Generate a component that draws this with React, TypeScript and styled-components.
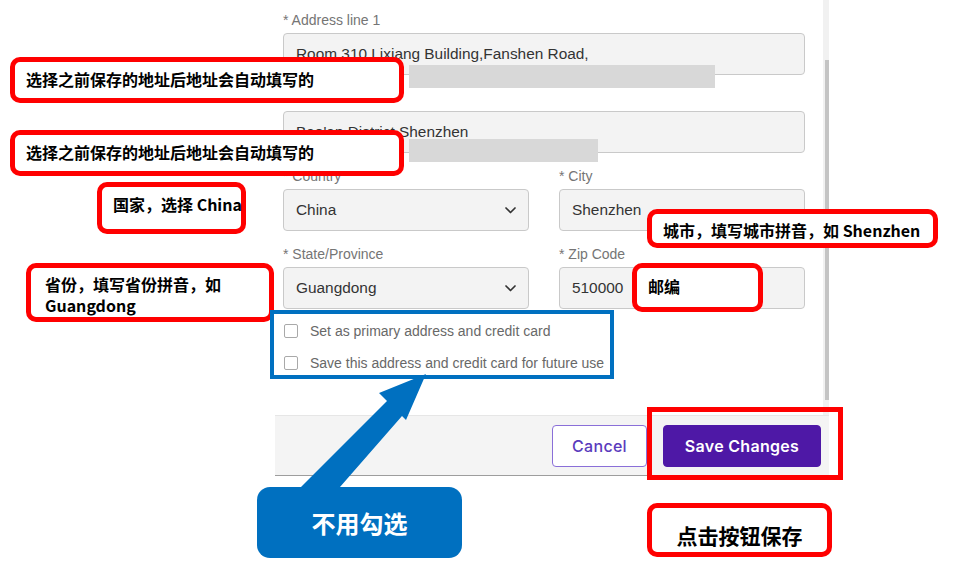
import React from "react";
import styled, { createGlobalStyle } from "styled-components";

const Global = createGlobalStyle`
  html, body { margin: 0; padding: 0; background: #ffffff; }
  * { box-sizing: border-box; }
`;

const Page = styled.div`
  position: relative;
  width: 958px;
  height: 583px;
  overflow: hidden;
  background: #fff;
  font-family: "Liberation Sans", Arial, sans-serif;
`;

const Panel = styled.div`
  margin-left: 275px;
  width: 554px;
  display: flex;
  flex-direction: column;
`;

const BodyRow = styled.div`
  display: flex;
  height: 415px;
`;

const Form = styled.div`
  flex: 1;
  padding: 11px 18px 0 8px;
  display: flex;
  flex-direction: column;
`;

const Grid = styled.div`
  display: grid;
  grid-template-columns: 246px 246px;
  column-gap: 30px;
  row-gap: 14px;
`;

const Field = styled.div<{ $full?: boolean }>`
  display: flex;
  flex-direction: column;
  gap: 3px;
  grid-column: ${(p) => (p.$full ? "1 / span 2" : "auto")};
`;

const Label = styled.div`
  min-height: 19px;
  font-size: 14px;
  line-height: 19px;
  color: #757575;
  white-space: nowrap;
`;

const Input = styled.div`
  position: relative;
  height: 42px;
  background: #f3f3f3;
  border: 1px solid #c9c9c9;
  border-radius: 4px;
  padding: 0 12px;
  display: flex;
  align-items: center;
  justify-content: space-between;
  font-size: 15.4px;
  color: #333;
  white-space: nowrap;
`;

const Chevron = () => (
  <svg width="11" height="7" viewBox="0 0 11 7">
    <path d="M1 1l4.5 4.5L10 1" fill="none" stroke="#333" strokeWidth="1.7" strokeLinecap="round" strokeLinejoin="round" />
  </svg>
);

const Checks = styled.div`
  margin-top: 6px;
  display: flex;
  flex-direction: column;
`;

const CheckRow = styled.label`
  height: 32px;
  display: flex;
  align-items: center;
  gap: 12px;
  padding-left: 1px;
  font-size: 14px;
  color: #686868;
  white-space: nowrap;
`;

const Box = styled.span`
  flex: none;
  width: 14px;
  height: 14px;
  border: 1px solid #a9a9a9;
  border-radius: 2px;
  background: #fff;
`;

const Track = styled.div`
  width: 6px;
  background: #f1f1f1;
  padding-top: 60px;
`;

const Thumb = styled.div`
  margin-left: 2px;
  width: 4px;
  height: 340px;
  background: #c4c4c4;
`;

const Footer = styled.div`
  height: 61px;
  background: #f4f4f4;
  border-top: 1px solid #e6e6e6;
  border-bottom: 1px solid #9d9d9d;
  display: flex;
  align-items: center;
  justify-content: flex-end;
  gap: 16px;
  padding-right: 8px;
`;

const Button = styled.button<{ $primary?: boolean; $w: number }>`
  width: ${(p) => p.$w}px;
  height: 42px;
  border-radius: 4px;
  font-family: Inter, "Noto Sans", sans-serif;
  font-size: 16px;
  font-weight: ${(p) => (p.$primary ? 600 : 500)};
  letter-spacing: 0.3px;
  cursor: pointer;
  background: ${(p) => (p.$primary ? "#4e18a6" : "#ffffff")};
  color: ${(p) => (p.$primary ? "#ffffff" : "#5a3bbd")};
  border: 1px solid ${(p) => (p.$primary ? "#4e18a6" : "#8a6fd8")};
`;

type Pos = { $x: number; $y: number; $w: number; $h: number };

const Redact = styled.div<Pos>`
  position: absolute;
  left: ${(p) => p.$x}px;
  top: ${(p) => p.$y}px;
  width: ${(p) => p.$w}px;
  height: ${(p) => p.$h}px;
  background: #d8d8d8;
`;

const Note = styled.div<Pos & { $pt: number; $pl: number; $size?: number; $lh?: number; $center?: boolean; $round?: boolean }>`
  position: absolute;
  z-index: 3;
  left: ${(p) => p.$x}px;
  top: ${(p) => p.$y}px;
  width: ${(p) => p.$w}px;
  height: ${(p) => p.$h}px;
  border: 5px solid #ff0000;
  border-radius: ${(p) => (p.$round === false ? 0 : 10)}px;
  background: ${(p) => (p.$round === false ? "transparent" : "#ffffff")};
  padding-top: ${(p) => p.$pt}px;
  padding-left: ${(p) => p.$pl}px;
  text-align: ${(p) => (p.$center ? "center" : "left")};
  font-family: "Noto Sans CJK SC", "Noto Sans", sans-serif;
  font-weight: 700;
  font-size: ${(p) => p.$size ?? 16}px;
  line-height: ${(p) => p.$lh ?? (p.$size ? p.$size + 6 : 20)}px;
  color: #000;
  white-space: nowrap;
`;

const BlueFrame = styled.div<Pos>`
  position: absolute;
  z-index: 3;
  left: ${(p) => p.$x}px;
  top: ${(p) => p.$y}px;
  width: ${(p) => p.$w}px;
  height: ${(p) => p.$h}px;
  border: 4px solid #0070c0;
`;

const BlueTag = styled.div<Pos>`
  position: absolute;
  z-index: 5;
  left: ${(p) => p.$x}px;
  top: ${(p) => p.$y}px;
  width: ${(p) => p.$w}px;
  height: ${(p) => p.$h}px;
  border-radius: 13px;
  background: #0070c0;
  display: flex;
  align-items: center;
  justify-content: center;
  color: #fff;
  font-family: "Noto Sans CJK SC", "Noto Sans", sans-serif;
  font-weight: 700;
  font-size: 24px;
`;

const ArrowLayer = styled.svg`
  position: absolute;
  z-index: 4;
  left: 0;
  top: 0;
  pointer-events: none;
`;

export default function App() {
  return (
    <Page>
      <Global />
      <Panel>
        <BodyRow>
          <Form>
            <Grid>
              <Field $full>
                <Label>* Address line 1</Label>
                <Input>Room 310 Lixiang Building,Fanshen Road,</Input>
              </Field>
              <Field $full>
                <Label />
                <Input>Bao'an District Shenzhen</Input>
              </Field>
              <Field>
                <Label>* Country</Label>
                <Input>
                  China
                  <Chevron />
                </Input>
              </Field>
              <Field>
                <Label>* City</Label>
                <Input>Shenzhen</Input>
              </Field>
              <Field>
                <Label>* State/Province</Label>
                <Input>
                  Guangdong
                  <Chevron />
                </Input>
              </Field>
              <Field>
                <Label>* Zip Code</Label>
                <Input>510000</Input>
              </Field>
            </Grid>
            <Checks>
              <CheckRow>
                <Box />
                Set as primary address and credit card
              </CheckRow>
              <CheckRow>
                <Box />
                Save this address and credit card for future use
              </CheckRow>
            </Checks>
          </Form>
          <Track>
            <Thumb />
          </Track>
        </BodyRow>
        <Footer>
          <Button $w={95}>Cancel</Button>
          <Button $primary $w={158}>Save Changes</Button>
        </Footer>
      </Panel>

      <Redact $x={409} $y={65} $w={306} $h={23} />
      <Redact $x={409} $y={139} $w={189} $h={23} />

      <Note $x={10} $y={57} $w={394} $h={46} $pt={7} $pl={11}>
        选择之前保存的地址后地址会自动填写的
      </Note>
      <Note $x={10} $y={130} $w={394} $h={46} $pt={7} $pl={11}>
        选择之前保存的地址后地址会自动填写的
      </Note>
      <Note $x={97} $y={182} $w={149} $h={52} $pt={7} $pl={11}>
        国家，选择 China
      </Note>
      <Note $x={26} $y={263} $w={248} $h={59} $pt={6} $pl={14} $lh={21}>
        省份，填写省份拼音，如
        <br />
        Guangdong
      </Note>
      <Note $x={647} $y={209} $w={291} $h={39} $pt={6} $pl={11}>
        城市，填写城市拼音，如 Shenzhen
      </Note>
      <Note $x={632} $y={263} $w={131} $h={49} $pt={8} $pl={11}>
        邮编
      </Note>
      <Note $x={647} $y={407} $w={196} $h={73} $pt={0} $pl={0} $round={false} />
      <Note $x={647} $y={503} $w={185} $h={54} $pt={14} $pl={0} $size={21} $center>
        点击按钮保存
      </Note>

      <BlueFrame $x={270} $y={310} $w={344} $h={69} />
      <ArrowLayer width="958" height="583" viewBox="0 0 958 583">
        <polygon
          points="293,495 387,401 379,393 426,374 406,420 402,416 333,495"
          fill="#0070c0"
        />
      </ArrowLayer>
      <BlueTag $x={257} $y={487} $w={205} $h={71}>
        不用勾选
      </BlueTag>
    </Page>
  );
}
